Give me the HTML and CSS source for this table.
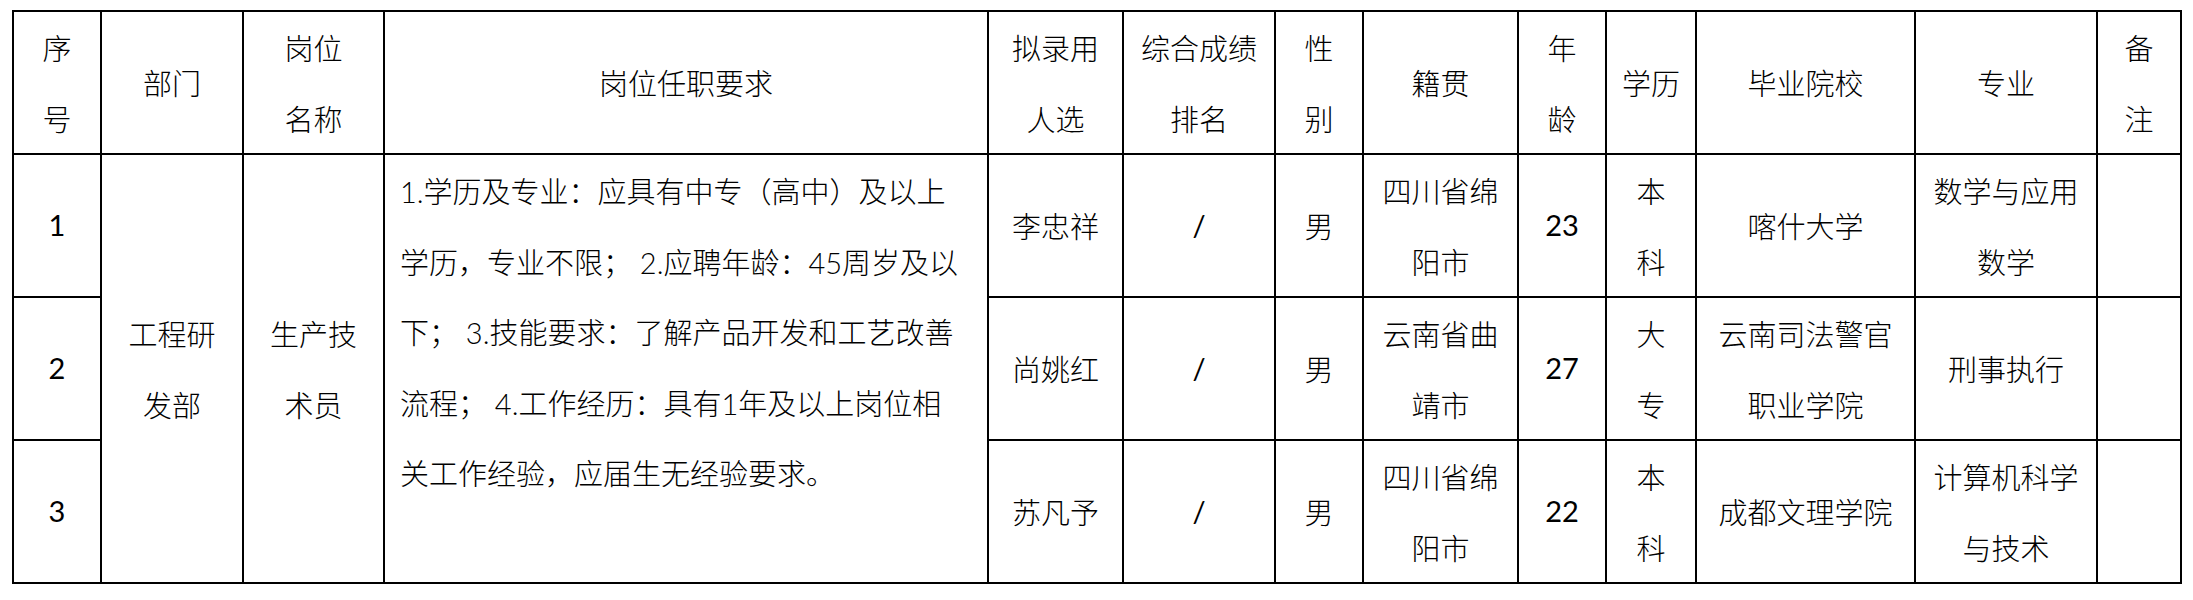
FILE: index.html
```html
<!DOCTYPE html>
<html lang="zh-CN">
<head>
<meta charset="utf-8">
<title>拟录用人员名单</title>
<link rel="stylesheet" href="styles.css">
</head>
<body>
<table class="grid">
  <colgroup>
    <col class="c-no"><col class="c-dept"><col class="c-post"><col class="c-req"><col class="c-name"><col class="c-rank"><col class="c-sex"><col class="c-home"><col class="c-age"><col class="c-edu"><col class="c-school"><col class="c-major"><col class="c-note">
  </colgroup>
  <tr class="row">
    <td>序<br>号</td>
    <td>部门</td>
    <td>岗位<br>名称</td>
    <td>岗位任职要求</td>
    <td>拟录用<br>人选</td>
    <td>综合成绩<br>排名</td>
    <td>性<br>别</td>
    <td>籍贯</td>
    <td>年<br>龄</td>
    <td>学历</td>
    <td>毕业院校</td>
    <td>专业</td>
    <td>备<br>注</td>
  </tr>
  <tr class="row">
    <td class="num">1</td>
    <td rowspan="3">工程研<br>发部</td>
    <td rowspan="3">生产技<br>术员</td>
    <td rowspan="3" class="req">1.学历及专业：应具有中专（高中）及以上<br>学历，专业不限； 2.应聘年龄：45周岁及以<br>下； 3.技能要求：了解产品开发和工艺改善<br>流程； 4.工作经历：具有1年及以上岗位相<br>关工作经验，应届生无经验要求。</td>
    <td>李忠祥</td>
    <td class="num">/</td>
    <td>男</td>
    <td>四川省绵<br>阳市</td>
    <td class="num">23</td>
    <td>本<br>科</td>
    <td>喀什大学</td>
    <td>数学与应用<br>数学</td>
    <td></td>
  </tr>
  <tr class="row">
    <td class="num">2</td>
    <td>尚姚红</td>
    <td class="num">/</td>
    <td>男</td>
    <td>云南省曲<br>靖市</td>
    <td class="num">27</td>
    <td>大<br>专</td>
    <td>云南司法警官<br>职业学院</td>
    <td>刑事执行</td>
    <td></td>
  </tr>
  <tr class="row">
    <td class="num">3</td>
    <td>苏凡予</td>
    <td class="num">/</td>
    <td>男</td>
    <td>四川省绵<br>阳市</td>
    <td class="num">22</td>
    <td>本<br>科</td>
    <td>成都文理学院</td>
    <td>计算机科学<br>与技术</td>
    <td></td>
  </tr>
</table>
</body>
</html>
```

FILE: styles.css
```css
html, body {
  margin: 0;
  padding: 0;
  background: #ffffff;
}

body {
  padding: 10px 0 0 12px;
  font-family: "Noto Sans CJK SC", sans-serif;
  font-weight: 300;
  color: #000000;
}

.grid {
  border-collapse: collapse;
  table-layout: fixed;
  width: 2168px;
}

.c-no { width: 88px; }
.c-dept { width: 142px; }
.c-post { width: 141px; }
.c-req { width: 604px; }
.c-name { width: 135px; }
.c-rank { width: 152px; }
.c-sex { width: 88px; }
.c-home { width: 155px; }
.c-age { width: 88px; }
.c-edu { width: 90px; }
.c-school { width: 219px; }
.c-major { width: 182px; }
.c-note { width: 84px; }

.row {
  height: 143px;
}

.grid td {
  border: 2px solid #000000;
  padding: 0;
  text-align: center;
  vertical-align: middle;
  font-size: 29px;
  line-height: 70.5px;
  white-space: nowrap;
}

.grid td.num {
  font-family: Lato, "Noto Sans CJK SC", sans-serif;
  font-weight: 400;
}

.grid td.req {
  text-align: left;
  vertical-align: top;
  padding: 2px 0 0 15px;
  font-family: Lato, "Noto Sans CJK SC", sans-serif;
}
```
